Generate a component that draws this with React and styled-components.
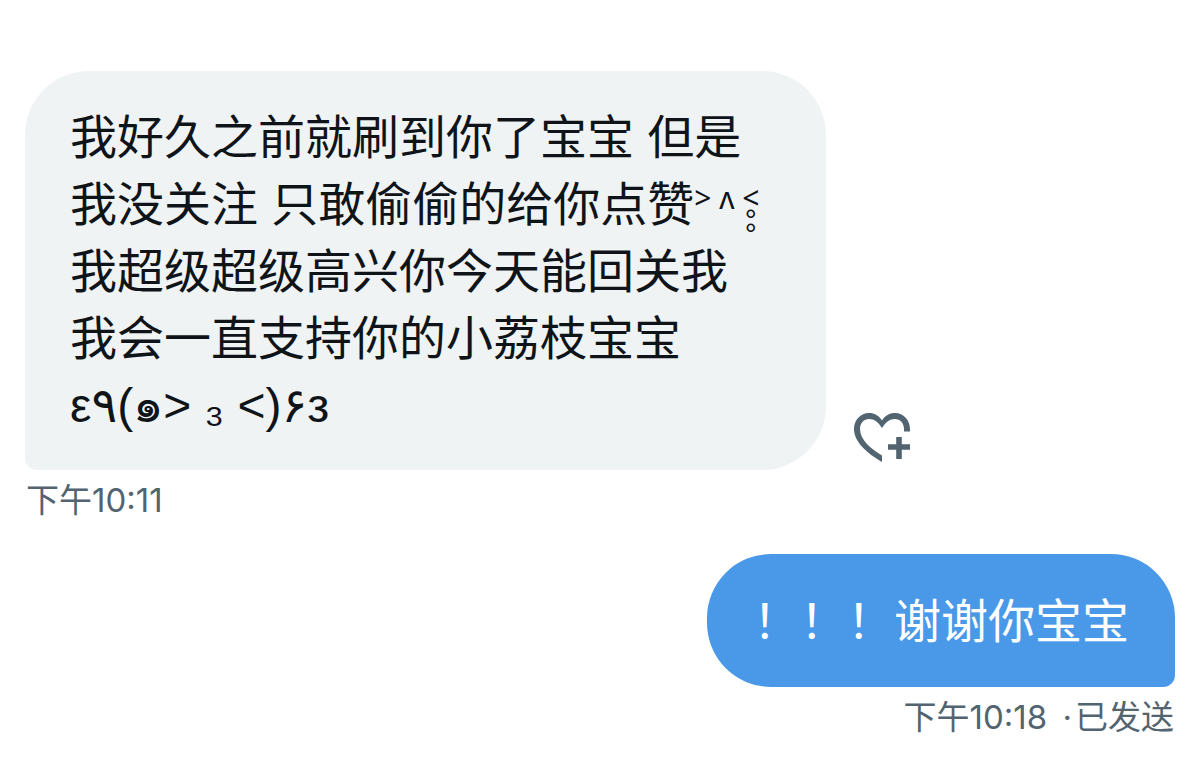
import React from 'react'
import styled, { createGlobalStyle } from 'styled-components'

const GlobalStyle = createGlobalStyle`
    * {
        box-sizing: border-box;
    }

    body {
        margin: 0;
        background: #fff;
        font-family: Inter, "Noto Sans CJK SC", "DejaVu Sans", sans-serif;
    }
`

const Conversation = styled.main`
    display: flex;
    flex-direction: column;
    gap: 30px;
    padding: 71px 25px 24px;
`

const Message = styled.article`
    display: flex;
    flex-direction: column;
    align-items: ${props => props.$sent ? 'flex-end' : 'flex-start'};
`

const Row = styled.div`
    display: flex;
    align-items: flex-end;
    gap: 23px;
`

const Bubble = styled.p`
    margin: 0;
    padding: ${props => props.$sent ? '33px 46px' : '32px 67px 32px 45px'};
    border-radius: ${props => props.$sent ? '64px 64px 12px 64px' : '64px 64px 64px 12px'};
    background: ${props => props.$sent ? '#4a99e9' : '#eff3f4'};
    color: ${props => props.$sent ? '#fff' : '#0f1419'};
    font-size: 47px;
    font-weight: 400;
    line-height: 67px;
`

const Line = styled.span`
    display: block;
`

const SmallFace = styled.span`
    font-family: "Noto Sans", sans-serif;
    font-size: 30px;
    line-height: 1;
    vertical-align: 12px;
`

const Ringed = styled.span`
    position: relative;
    display: inline-block;
`

/* two small rings stacked under the eye */
const Rings = styled.span`
    position: absolute;
    top: 100%;
    left: 0;
    right: 0;
    display: flex;
    flex-direction: column;
    align-items: center;
    font-family: "Liberation Sans", sans-serif;
    line-height: 14px;
`

const BigFace = styled.span`
    font-family: "Liberation Sans", "DejaVu Sans", sans-serif;
    font-size: 48px;
    line-height: 1;
`

const Time = styled.footer`
    padding: 6px 1px 0;
    color: #536471;
    font-size: 33px;
    line-height: 48px;
`

const Dot = styled.span`
    margin: 0 3px 0 6px;
`

const ReactButton = styled.button`
    display: flex;
    padding: 7px 4px;
    border: 0;
    background: none;
    color: #536471;
    cursor: pointer;

    svg {
        width: 58px;
        height: 52px;
    }
`

function HeartPlus() {
    return (
        <svg viewBox="0 0 58 52" fill="currentColor" aria-hidden="true">
            <path d="M29 51C14 42 1 31 1 18C1 9 7.500 2 16 2C21.500 2 26 4.500 29 9.500C32 4.500 36.500 2 42 2C50.500 2 57 9 57 18V20.500H51V18C51 12 47 8 42 8C36.500 8 33 11 29 17C25 11 21.500 8 16 8C11 8 7 12 7 18C7 28 17 37.500 29 44.500Z" />
            <path d="M43.200 26H48.800V33.200H57V38.800H48.800V48H43.200V38.800H35V33.200H43.200Z" />
        </svg>
    )
}

function App() {
    return (
        <>
            <GlobalStyle />
            <Conversation lang="zh-CN">
                <Message>
                    <Row>
                        <Bubble>
                            <Line>我好久之前就刷到你了宝宝 但是</Line>
                            <Line>
                                我没关注 只敢偷偷的给你点赞
                                <SmallFace>
                                    {'> ʌ '}
                                    <Ringed>
                                        {'<'}
                                        <Rings>
                                            <span>°</span>
                                            <span>°</span>
                                        </Rings>
                                    </Ringed>
                                </SmallFace>
                            </Line>
                            <Line>我超级超级高兴你今天能回关我</Line>
                            <Line>我会一直支持你的小荔枝宝宝</Line>
                            <Line><BigFace>{'ε٩(๑> ₃ <)۶з'}</BigFace></Line>
                        </Bubble>
                        <ReactButton type="button" aria-label="回应">
                            <HeartPlus />
                        </ReactButton>
                    </Row>
                    <Time>下午10:11</Time>
                </Message>
                <Message $sent>
                    <Bubble $sent>！！！谢谢你宝宝</Bubble>
                    <Time>下午10:18 <Dot>·</Dot>已发送</Time>
                </Message>
            </Conversation>
        </>
    )
}

export default App
